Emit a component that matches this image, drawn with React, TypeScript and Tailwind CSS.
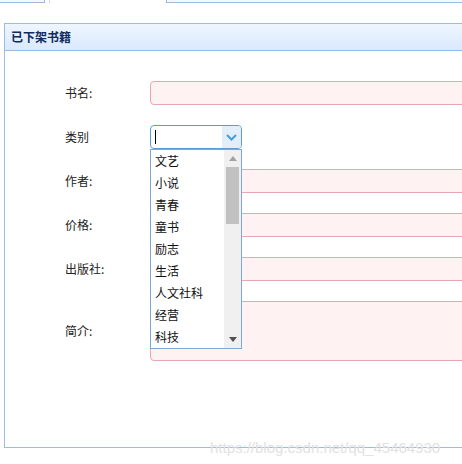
const categories = ['文艺', '小说', '青春', '童书', '励志', '生活', '人文社科', '经营', '科技'];

function Label({ text }: { text: string }) {
  return <div className="w-[85px] shrink-0 text-[12px] text-[#222]">{text}</div>;
}

function PinkInput({ tall }: { tall?: boolean }) {
  return (
    <div
      className={`w-[330px] shrink-0 rounded-[4px] border border-[#e6a7b1] bg-[#fff2f3] ${tall ? 'h-[60px]' : 'h-[24px]'}`}
    />
  );
}

function CategorySelect() {
  return (
    <div className="relative h-[24px] w-[92px] shrink-0">
      <div className="flex h-full w-full overflow-hidden rounded-[4px] border border-[#5d9bd6] bg-white">
        <div className="flex flex-1 items-center pl-[4px]">
          <div className="h-[14px] w-px bg-black" />
        </div>
        <div className="flex w-[19px] items-center justify-center bg-[#e2effb]">
          <svg width="11" height="7" viewBox="0 0 11 7">
            <path d="M1 1 L5.5 5.5 L10 1" fill="none" stroke="#4a9bd9" strokeWidth="2" />
          </svg>
        </div>
      </div>
      <div className="absolute left-0 top-[24px] z-10 flex h-[200px] w-[92px] border border-[#7fa7d3] bg-white">
        <div className="flex flex-1 flex-col">
          {categories.map((c) => (
            <div key={c} className="flex h-[22px] items-center pl-[4px] text-[12px] text-[#111]">
              {c}
            </div>
          ))}
        </div>
        <div className="flex w-[17px] flex-col items-center bg-[#f0f0f0]">
          <div className="flex h-[17px] items-center justify-center">
            <svg width="8" height="5" viewBox="0 0 8 5">
              <path d="M0 5 L4 0 L8 5 Z" fill="#a3a3a3" />
            </svg>
          </div>
          <div className="h-[57px] w-[13px] bg-[#c1c1c1]" />
          <div className="flex-1" />
          <div className="flex h-[17px] items-center justify-center">
            <svg width="8" height="5" viewBox="0 0 8 5">
              <path d="M0 0 L8 0 L4 5 Z" fill="#505050" />
            </svg>
          </div>
        </div>
      </div>
    </div>
  );
}

export default function App() {
  return (
    <div
      className="relative h-[464px] w-[462px] overflow-hidden bg-white"
      style={{ fontFamily: '"Microsoft YaHei", "Noto Sans CJK SC", sans-serif' }}
    >
      <div className="flex h-[3px]">
        <div className="h-[3px] w-[45px] border-b border-r border-[#9fbbdb] bg-[#f4f8fc]" />
        <div className="h-[3px] w-[5px] border-r border-[#c7d6e8]" />
        <div className="w-[116px]" />
        <div className="h-[3px] flex-1 border-b border-l border-[#9fbbdb] bg-[#f4f8fc]" />
      </div>

      <div className="ml-[4px] mt-[20px] h-[425px] w-[480px] border-b border-l border-t border-[#99bbe8]">
        <div className="flex h-[27px] items-center border-b border-[#99bbe8] bg-gradient-to-b from-[#eff6ff] to-[#d9e9fd] pl-[6px] text-[12px] font-bold text-[#0f2c5c]">
          已下架书籍
        </div>
        <div className="flex flex-col gap-[20px] pl-[60px] pt-[30px]">
          <div className="flex items-center">
            <Label text="书名:" />
            <PinkInput />
          </div>
          <div className="flex items-center">
            <Label text="类别" />
            <CategorySelect />
          </div>
          <div className="flex items-center">
            <Label text="作者:" />
            <PinkInput />
          </div>
          <div className="flex items-center">
            <Label text="价格:" />
            <PinkInput />
          </div>
          <div className="flex items-center">
            <Label text="出版社:" />
            <PinkInput />
          </div>
          <div className="flex items-center">
            <Label text="简介:" />
            <PinkInput tall />
          </div>
        </div>
      </div>

      <div
        className="absolute left-[210px] top-[437px] text-[15px] text-[#e2e2e2]"
        style={{ fontFamily: '"Liberation Sans", sans-serif' }}
      >
        https://blog.csdn.net/qq_45464930
      </div>
    </div>
  );
}
